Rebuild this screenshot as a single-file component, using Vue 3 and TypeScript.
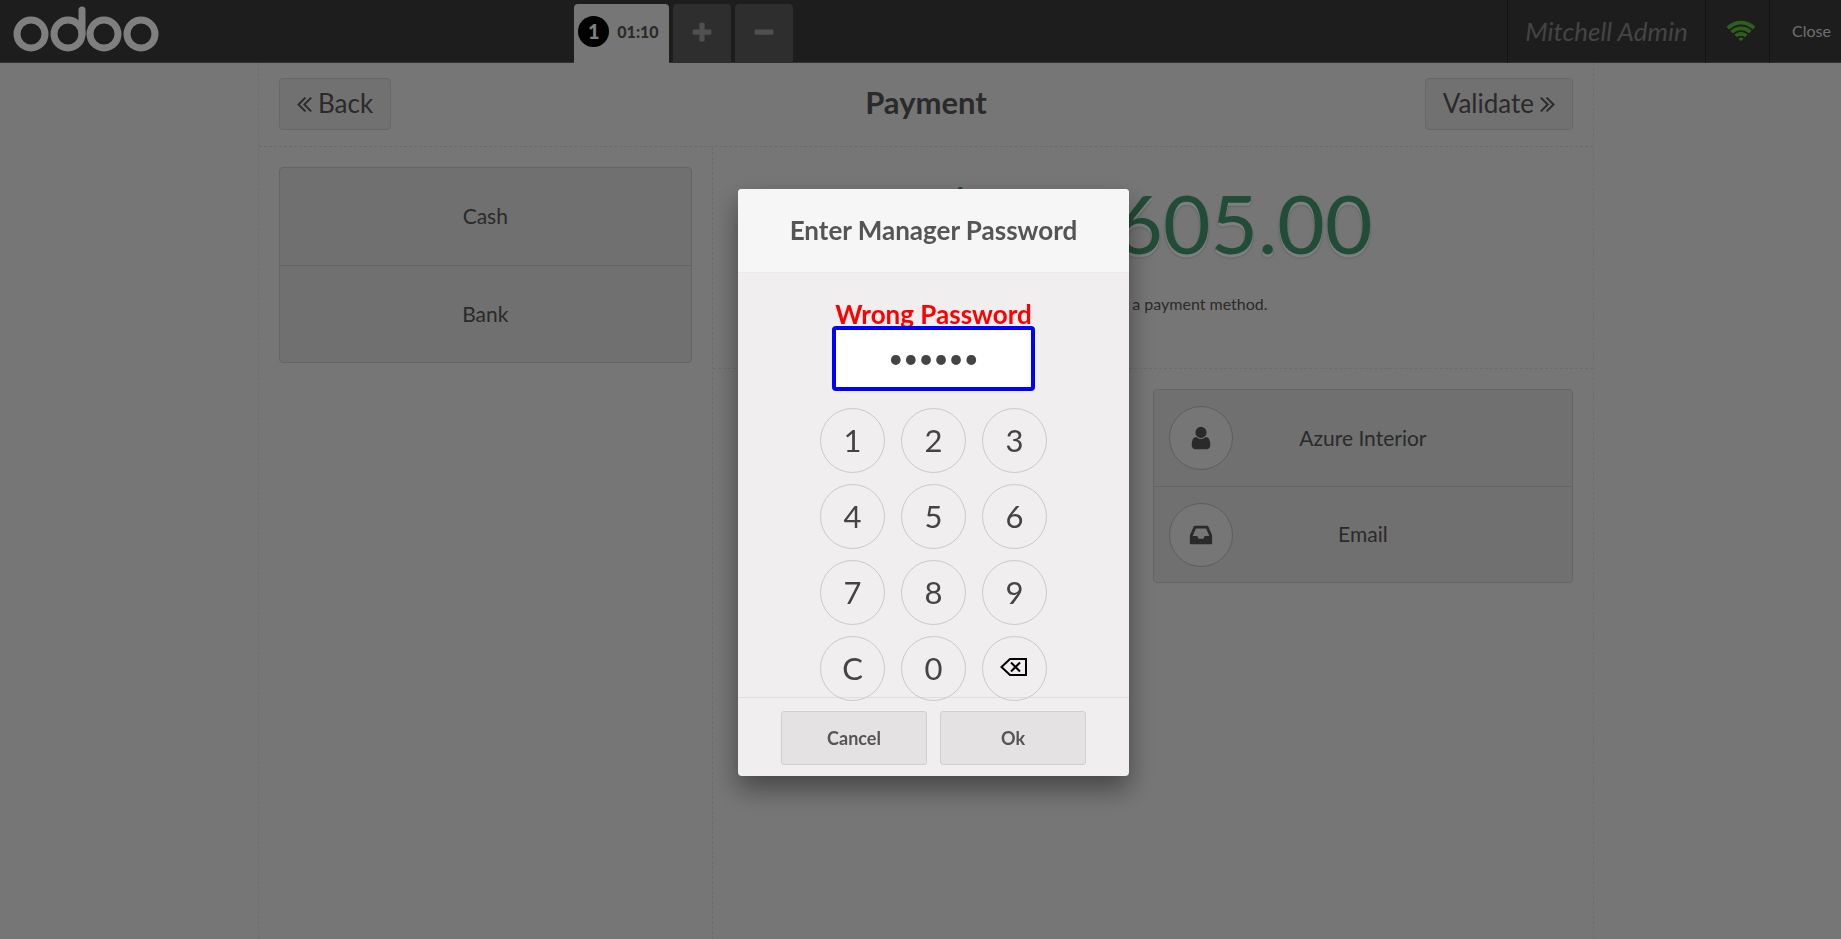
<script setup lang="ts">
import { ref } from 'vue'

interface PaymentMethod { id: number; name: string }

const methods: PaymentMethod[] = [
  { id: 1, name: 'Cash' },
  { id: 2, name: 'Bank' },
]
const keys: string[] = ['1', '2', '3', '4', '5', '6', '7', '8', '9', 'C', '0']
const password = ref<string>('123456')

function press(key: string): void {
  password.value = key === 'C' ? '' : password.value + key
}
function backspace(): void {
  password.value = password.value.slice(0, -1)
}
</script>

<template>
  <div class="pos">
    <header class="topbar">
      <svg class="logo" viewBox="0 0 148 48" role="img" aria-label="odoo">
        <g fill="none" stroke="#fff" stroke-width="7">
          <circle cx="18" cy="30" r="14" />
          <circle cx="55" cy="30" r="14" />
          <circle cx="91" cy="30" r="14" />
          <circle cx="128" cy="30" r="14" />
          <path d="M69 30V6" stroke-linecap="round" />
        </g>
      </svg>
      <nav class="tabs">
        <button class="tab active"><span class="badge">1</span><span>01:10</span></button>
        <button class="tab" aria-label="New order">
          <svg class="tab-icon" viewBox="0 0 1792 1792"><path d="M1600 736v192q0 40-28 68t-68 28h-416v416q0 40-28 68t-68 28h-192q-40 0-68-28t-28-68v-416h-416q-40 0-68-28t-28-68v-192q0-40 28-68t68-28h416v-416q0-40 28-68t68-28h192q40 0 68 28t28 68v416h416q40 0 68 28t28 68z" /></svg>
        </button>
        <button class="tab" aria-label="Delete order">
          <svg class="tab-icon" viewBox="0 0 1792 1792"><path d="M1600 736v192q0 40-28 68t-68 28h-1216q-40 0-68-28t-28-68v-192q0-40 28-68t68-28h1216q40 0 68 28t28 68z" /></svg>
        </button>
      </nav>
      <div class="status">
        <span class="cell user">Mitchell Admin</span>
        <span class="cell wifi">
          <svg viewBox="0 0 2048 1792" role="img" aria-label="Connected"><path d="M1024 1523q-20 0-93-73.500t-73-93.500q0-32 62.500-54t103.500-22 103.500 22 62.500 54q0 20-73 93.500t-93 73.500zm270-271q-2 0-40-25t-101.500-50-128.500-25-128.500 25-101 50-40.500 25q-18 0-93.500-75t-75.500-93q0-13 10-23 78-77 196-121t233-44 233 44 196 121q10 10 10 23 0 18-75.500 93t-93.500 75zm273-272q-11 0-23-8-136-105-252-154.500t-268-49.500q-85 0-170.500 22t-149 53-113.500 62-79 53-31 22q-17 0-92-75t-75-93q0-12 10-22 132-132 320-205t380-73 380 73 320 205q10 10 10 22 0 18-75 93t-92 75zm271-271q-11 0-22-9-179-157-371.500-236.500t-420.500-79.500-420.500 79.500-371.500 236.500q-11 9-22 9-17 0-92.500-75t-75.500-93q0-13 10-23 187-186 445-288t527-102 527 102 445 288q10 10 10 23 0 18-75.500 93t-92.500 75z" /></svg>
        </span>
        <button class="cell close">Close</button>
      </div>
    </header>

    <main class="screen">
      <div class="content">
        <div class="heading">
          <button class="nav-button">
            <svg class="chevrons back" viewBox="397 461 966 998"><path d="M979 960q0 13-10 23l-466 466q-10 10-23 10t-23-10l-50-50q-10-10-10-23t10-23l393-393-393-393q-10-10-10-23t10-23l50-50q10-10 23-10t23 10l466 466q10 10 10 23zm384 0q0 13-10 23l-466 466q-10 10-23 10t-23-10l-50-50q-10-10-10-23t10-23l393-393-393-393q-10-10-10-23t10-23l50-50q10-10 23-10t23 10l466 466q10 10 10 23z" /></svg>
            Back
          </button>
          <h1>Payment</h1>
          <button class="nav-button">
            Validate
            <svg class="chevrons" viewBox="397 461 966 998"><path d="M979 960q0 13-10 23l-466 466q-10 10-23 10t-23-10l-50-50q-10-10-10-23t10-23l393-393-393-393q-10-10-10-23t10-23l50-50q10-10 23-10t23 10l466 466q10 10 10 23zm384 0q0 13-10 23l-466 466q-10 10-23 10t-23-10l-50-50q-10-10-10-23t10-23l393-393-393-393q-10-10-10-23t10-23l50-50q10-10 23-10t23 10l466 466q10 10 10 23z" /></svg>
          </button>
        </div>
        <div class="columns">
          <section class="left">
            <div class="group methods">
              <button v-for="m in methods" :key="m.id">{{ m.name }}</button>
            </div>
          </section>
          <section class="right">
            <div class="summary">
              <div class="total">$ 14,605.00</div>
              <p>Please select a payment method.</p>
            </div>
            <div class="options">
              <div class="group customer">
                <button>
                  <span class="round"><svg viewBox="0 0 1792 1792"><path d="M1536 1399q0 109-62.500 187t-150.500 78h-854q-88 0-150.500-78t-62.500-187q0-85 8.500-160.500t31.500-152 58.500-131 94-89 134.500-34.500q131 128 313 128t313-128q76 0 134.500 34.500t94 89 58.500 131 31.500 152 8.500 160.500zm-256-887q0 159-112.500 271.500t-271.500 112.500-271.500-112.500-112.500-271.500 112.500-271.500 271.500-112.500 271.500 112.500 112.500 271.500z" /></svg></span>
                  <span class="name">Azure Interior</span>
                </button>
                <button>
                  <span class="round"><svg viewBox="0 0 1792 1792"><path d="M1151 960h316q-1-3-2.500-8.500t-2.500-7.500l-212-496h-708l-212 496q-1 3-2.500 8.500t-2.500 7.500h316l95 192h320zm513 30v482q0 26-19 45t-45 19h-1408q-26 0-45-19t-19-45v-482q0-62 25-123l238-552q10-25 36.500-42t52.500-17h832q26 0 52.500 17t36.500 42l238 552q25 61 25 123z" /></svg></span>
                  <span class="name">Email</span>
                </button>
              </div>
            </div>
          </section>
        </div>
      </div>
    </main>

    <div class="overlay">
      <form class="popup" role="dialog" aria-labelledby="popup-title" @submit.prevent>
        <h2 id="popup-title">Enter Manager Password</h2>
        <div class="body">
          <label for="manager-password">Wrong Password</label>
          <input id="manager-password" v-model="password" type="password" autocomplete="off" />
          <div class="keypad">
            <button v-for="k in keys" :key="k" type="button" @click="press(k)">{{ k }}</button>
            <button class="erase" type="button" aria-label="Backspace" @click="backspace">
              <svg width="28" height="20" viewBox="0 0 28 20" fill="none" stroke="#000">
                <path d="M1.500 10L10 2H26V18H10Z" stroke-width="2" />
                <path d="M11 5.500L20 14.500M20 5.500L11 14.500" stroke-width="2" />
              </svg>
            </button>
          </div>
        </div>
        <footer>
          <button type="button">Cancel</button>
          <button type="submit">Ok</button>
        </footer>
      </form>
    </div>
  </div>
</template>

<style>
body {
  margin: 0;
}
</style>

<style scoped>
.pos {
  min-height: 100vh;
  display: flex;
  flex-direction: column;
  background: #eeecec;
  color: #555;
  font-family: Lato, "Liberation Sans", sans-serif;
  font-size: 16px;
}
.pos * {
  box-sizing: border-box;
}
button {
  margin: 0;
  padding: 0;
  border: 0;
  background: none;
  color: inherit;
  font: inherit;
}
.topbar {
  height: 63px;
  display: grid;
  grid-template-columns: 574px 1fr auto;
  background: #3a3a3a;
  border-bottom: 1px solid #646464;
}
.logo {
  width: 148px;
  height: 48px;
  margin: 4px 0 0 13px;
}
.tabs {
  display: flex;
  gap: 4px;
  height: 59px;
  margin-top: 4px;
}
.tab {
  width: 58px;
  display: flex;
  align-items: center;
  justify-content: center;
  padding-bottom: 2px;
  border-radius: 4px 4px 0 0;
  background: #5c5c5c;
}
.tab.active {
  width: 95px;
  gap: 8px;
  padding: 0 6px 4px 0;
  background: #eeecec;
  font-weight: 900;
}
.badge {
  width: 31px;
  height: 31px;
  border-radius: 50%;
  background: #000;
  color: #fff;
  font-size: 20px;
  line-height: 31px;
  text-align: center;
}
.tab-icon {
  width: 24px;
  height: 24px;
  fill: #a0a0a0;
}
.status {
  display: flex;
}
.cell {
  display: flex;
  align-items: center;
  justify-content: center;
  padding-bottom: 2px;
  border-left: 1px solid #292929;
}
.user {
  width: 198px;
  color: #888;
  font-size: 26px;
  font-style: italic;
}
.wifi {
  width: 64px;
  padding: 0 0 0 6px;
}
.wifi svg {
  width: 30px;
  height: 26px;
  fill: #5bc236;
}
.close {
  width: 72px;
  padding-left: 12px;
  color: #ddd;
}
.screen {
  flex: 1;
  display: flex;
  justify-content: center;
  padding-left: 11px;
}
.content {
  width: 100%;
  max-width: 1336px;
  display: flex;
  flex-direction: column;
  border: dashed #dcdcdc;
  border-width: 0 1px;
}
.heading {
  height: 84px;
  display: flex;
  align-items: center;
  justify-content: space-between;
  padding: 0 20px 2px;
  border-bottom: 1px dashed #d4d4d4;
  position: relative;
}
.heading h1 {
  position: absolute;
  left: 0;
  right: 0;
  margin: 0;
  padding-bottom: 4px;
  text-align: center;
  font-size: 31px;
  line-height: 40px;
  pointer-events: none;
}
.nav-button {
  height: 52px;
  display: flex;
  align-items: center;
  gap: 6px;
  padding: 0 17px 2px;
  border: 1px solid #d0d0d0;
  border-radius: 4px;
  background: #e3e2e2;
  font-size: 26px;
}
.chevrons {
  width: 15px;
  height: 15px;
  margin-top: 4px;
  fill: #555;
}
.chevrons.back {
  transform: rotate(180deg);
}
.columns {
  flex: 1;
  display: grid;
  grid-template-columns: 34% 1fr;
}
.left {
  padding: 20px;
  border-right: 1px dashed #d8d8d8;
}
.group {
  display: flex;
  flex-direction: column;
  border: 1px solid #cacaca;
  border-radius: 4px;
  background: #e0e0e0;
  font-size: 21px;
}
.group button + button {
  border-top: 1px solid #cacaca;
}
.methods button {
  height: 97px;
  padding-bottom: 2px;
}
.summary {
  height: 222px;
  padding-top: 25px;
  border-bottom: 1px dashed #d8d8d8;
  text-align: center;
}
.total {
  color: #43996e;
  font-size: 82px;
  line-height: 100px;
  text-shadow: 0 3px 0 #fff, 0 3px 3px rgba(0, 0, 0, 0.27);
}
.summary p {
  margin: 22px 0 0;
  line-height: 20px;
}
.options {
  display: flex;
  justify-content: flex-end;
  padding: 20px;
}
.customer {
  width: 50%;
}
.customer button {
  height: 96px;
  display: flex;
  align-items: center;
  padding: 0 15px;
}
.round {
  width: 64px;
  height: 64px;
  display: flex;
  align-items: center;
  justify-content: center;
  border: 1px solid #bcbcbc;
  border-radius: 50%;
  background: #eeecec;
}
.round svg {
  width: 26px;
  height: 26px;
  fill: #555;
}
.name {
  flex: 1;
  padding: 0 64px 2px 0;
}
.overlay {
  position: fixed;
  inset: 0;
  display: flex;
  align-items: center;
  justify-content: center;
  padding: 26px 0 0 26px;
  background: rgba(0, 0, 0, 0.5);
}
.popup {
  width: 391px;
  overflow: hidden;
  border-radius: 4px;
  background: #f0eeee;
  box-shadow: 0 13px 26px rgba(0, 0, 0, 0.4);
}
.popup h2 {
  margin: 0;
  border-bottom: 1px solid #ebe9e9;
  background: #f6f6f6;
  font-size: 26px;
  line-height: 83px;
  text-align: center;
}
.body {
  display: flex;
  flex-direction: column;
  align-items: center;
  padding-top: 25px;
}
.body label {
  height: 28px;
  color: #f00;
  font-size: 26px;
  font-weight: 700;
  line-height: 32px;
}
.body input {
  width: 203px;
  height: 65px;
  padding: 0 0 2px;
  border: 4px solid #00f;
  border-radius: 4px;
  outline: 0;
  background: #fff;
  color: #444;
  font: 26px Lato, sans-serif;
  text-align: center;
}
.keypad {
  display: grid;
  grid-template-columns: repeat(3, 65px);
  gap: 11px 16px;
  margin-top: 17px;
}
.keypad button {
  height: 65px;
  display: flex;
  align-items: center;
  justify-content: center;
  padding-bottom: 2px;
  border: 1px solid #cbc9c9;
  border-radius: 50%;
  color: #444;
  font-size: 31px;
}
.keypad .erase {
  padding: 0 2px 4px 0;
}
footer {
  display: flex;
  justify-content: center;
  gap: 13px;
  margin-top: -4px;
  padding: 13px 0 11px;
  border-top: 1px solid #dfdddd;
}
footer button {
  width: 146px;
  height: 54px;
  border: 1px solid #d0cece;
  border-radius: 3px;
  background: #e4e2e2;
  font-size: 18px;
  font-weight: 700;
}
</style>
